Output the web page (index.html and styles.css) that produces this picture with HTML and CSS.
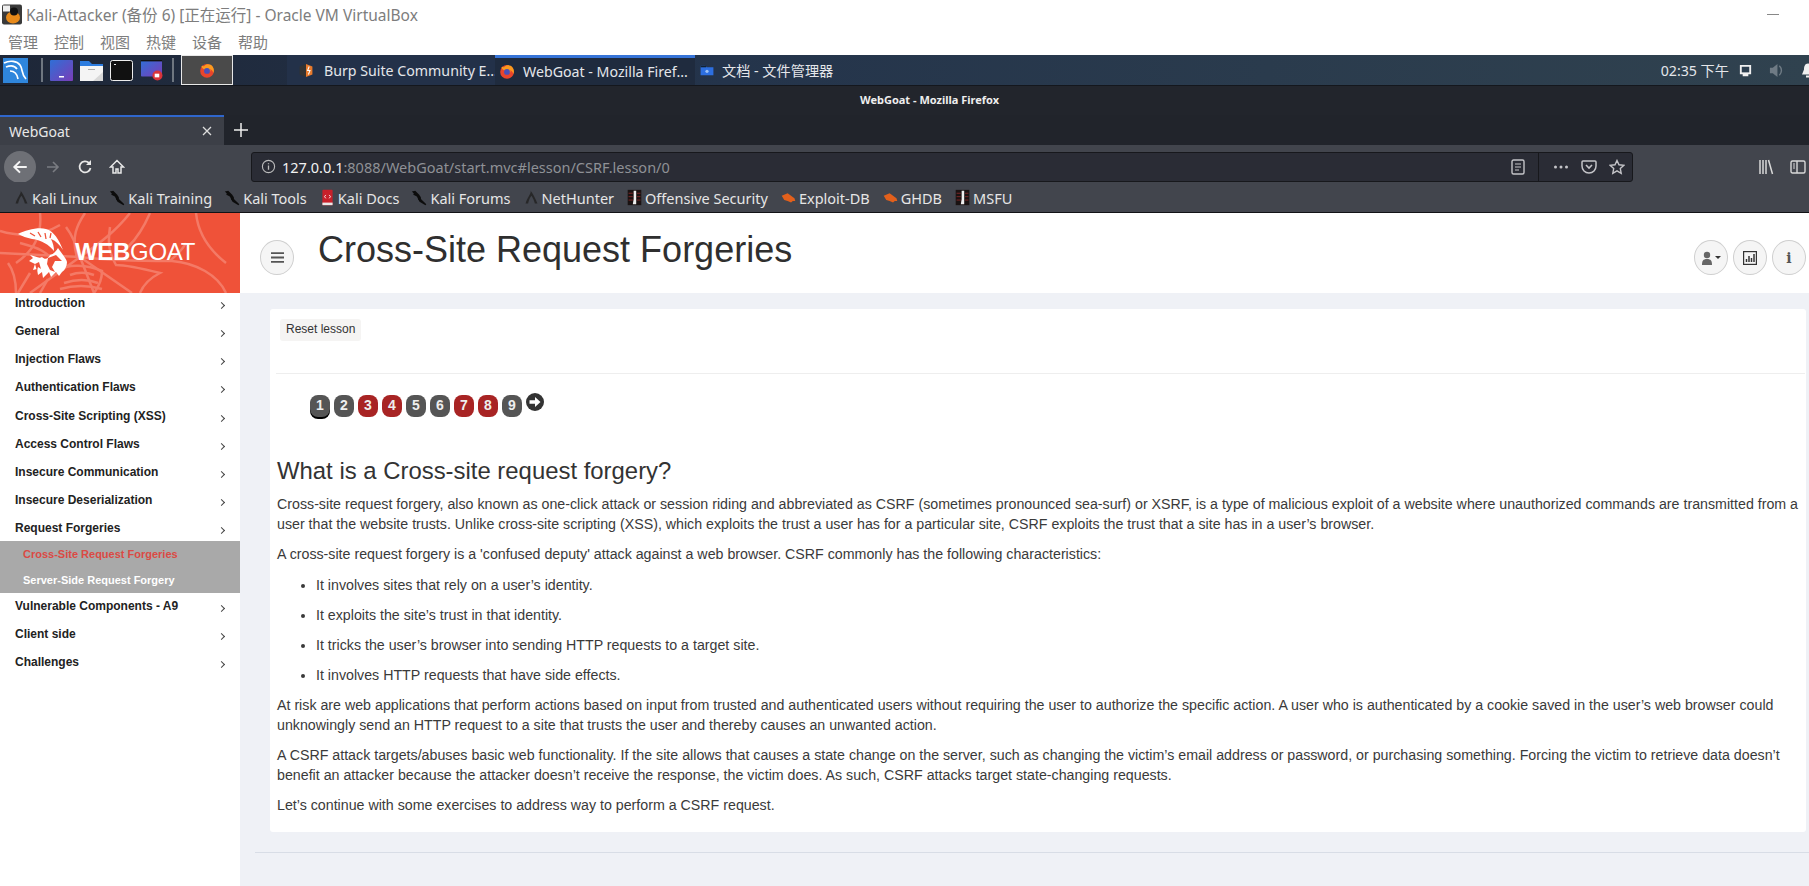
FILE: index.html
```html
<!DOCTYPE html>
<html lang="en">

<head>
    <meta charset="UTF-8">
    <title>WebGoat - Mozilla Firefox</title>
    <link rel="stylesheet" href="styles.css">
</head>

<body>
    <svg class="defs" width="0" height="0">
        <defs>
            <linearGradient id="screen" x1="0" y1="0" x2="1" y2="1">
                <stop offset="0" stop-color="#2f6fd6"/>
                <stop offset="1" stop-color="#7a3db8"/>
            </linearGradient>
        </defs>
        <symbol id="firefox" viewBox="0 0 20 20">
            <circle cx="10" cy="10.5" r="8.5" fill="#e8452c"/>
            <path d="M3 5c1-1 2-1 2-1 0 1 1 1 2 0 3-3 8-2 10 1 2 3 2 6 1 8-1-3-2-4-4-5 1 2 0 4-2 4-3 0-3-2-3-3-2 0-5-1-6-4z" fill="#fb9a1f"/>
            <circle cx="10" cy="10.5" r="3.7" fill="#4b4fb8"/>
        </symbol>
        <symbol id="dragon" viewBox="0 0 20 20">
            <path d="M1 3l4-1 5 5 2 5 6 6-1 1-7-4-3-6z" fill="#0c0c0c"/>
            <path d="M3 6l4 2M11 9l-2 4" stroke="#0c0c0c" stroke-width="1.500"/>
        </symbol>
        <symbol id="netdragon" viewBox="0 0 20 20">
            <path d="M9 2c1 3-4 8-6 15h3c1-4 2-7 4-9 2 3 3 6 4 9h3C15 12 12 6 9 2z" fill="#222" opacity=".85"/>
        </symbol>
        <symbol id="bug" viewBox="0 0 20 20">
            <path d="M2 8l7-3 8 6 1 3-3 0-2 2-4-2-4-1z" fill="#e2601c"/>
        </symbol>
        <symbol id="offsec" viewBox="0 0 20 20">
            <rect x="2" y="1" width="16" height="18" fill="#1a1212"/>
            <path d="M9 2h3v16H8l1-6z" fill="#eee"/>
            <path d="M3 5h5M3 9h5M3 13h5M13 5h4M13 9h4M13 13h4" stroke="#8a2a2a"/>
        </symbol>
    </svg>

    <header class="vbox-bar">
        <div class="vbox-title">
            <svg class="vbox-icon" viewBox="0 0 20 20">
                <rect width="20" height="20" rx="2" fill="#3a3a3a"/>
                <rect x="1" y="1" width="7" height="6" fill="#eee"/>
                <ellipse cx="11" cy="13" rx="7" ry="6" fill="#e88a1a"/>
                <circle cx="12" cy="7" r="4" fill="#111"/>
            </svg>
            <span>Kali-Attacker (备份 6) [正在运行] - Oracle VM VirtualBox</span>
            <span class="win-min"></span>
        </div>
        <nav class="vbox-menu">
            <span>管理</span><span>控制</span><span>视图</span><span>热键</span><span>设备</span><span>帮助</span>
        </nav>
    </header>

    <div class="panel">
        <svg class="kali-logo" viewBox="0 0 25 25">
            <rect width="25" height="25" fill="#2f86dc"/>
            <path d="M1 5c6-3 13-2 16 2 3 4 1 9 6 14M3 9c5-2 9-1 11 2M7 13c4 0 7 2 8 8" stroke="#fff" stroke-width="1.700" fill="none"/>
        </svg>
        <span class="panel-sep"></span>
        <div class="launchers">
            <svg viewBox="0 0 23 21"><rect width="23" height="21" rx="1" fill="url(#screen)"/><rect x="9" y="16" width="5" height="1.500" fill="#fff"/></svg>
            <svg viewBox="0 0 23 21"><path d="M0 1h9l3 3h11v6H0z" fill="#2d7de0"/><path d="M0 6h23v15H0z" fill="#f4f4f4"/><path d="M23 12v9H13z" fill="#d8d8d8"/><rect x="8" y="9" width="7" height="1" fill="#aaa"/></svg>
            <svg viewBox="0 0 23 21"><rect x=".5" y=".5" width="22" height="20" rx="2" fill="#111" stroke="#eee"/><rect x="4" y="4" width="2" height="1" fill="#eee"/></svg>
            <svg viewBox="0 0 23 23"><rect width="23" height="18" rx="1" fill="url(#screen)"/><rect width="23" height="1.500" fill="#111"/><circle cx="18" cy="17" r="5.500" fill="#d8343a"/><rect x="15" y="15" width="5" height="4" fill="#fff"/></svg>
        </div>
        <span class="panel-sep panel-sep-end"></span>
        <div class="launch-task"><svg><use href="#firefox"/></svg></div>
        <div class="tasks">
            <div class="task task-burp">
                <svg class="task-icon" viewBox="0 0 20 20"><path d="M2 5l8-3v16l-8-3z" fill="#333"/><path d="M10 2l8 3v10l-8 3z" fill="#e87a2c"/><path d="M14 5l-2 5h3l-2 5" stroke="#fff" stroke-width="1.300" fill="none"/></svg>
                <span>Burp Suite Community E...</span>
            </div>
            <div class="task task-active">
                <svg class="task-icon"><use href="#firefox"/></svg>
                <span>WebGoat - Mozilla Firef...</span>
            </div>
            <div class="task task-files">
                <svg class="task-icon" viewBox="0 0 20 20"><path d="M2 4h6l2 2h8v10H2z" fill="#2d6fe0"/><rect x="2" y="4" width="7" height="2" fill="#123"/><circle cx="10" cy="11" r="2" fill="#9cc2f5"/></svg>
                <span>文档 - 文件管理器</span>
            </div>
        </div>
        <div class="tray">
            <span class="clock">02:35 下午</span>
            <svg class="tray-net" viewBox="0 0 16 16"><path d="M2 2h12v10h-3v2H5v-2H2z" fill="#f0f0f0"/><rect x="4" y="4" width="8" height="6" fill="#2c3e4e"/></svg>
            <svg class="tray-vol" viewBox="0 0 16 16"><path d="M1 5h3l5-4v14l-5-4H1z" fill="#6f7b85"/><path d="M11 3c3 3 3 7 0 10" stroke="#6f7b85" fill="none" stroke-width="1.500"/></svg>
            <svg class="tray-bell" viewBox="0 0 16 16"><path d="M8 1c3 0 4 3 4 6l2 5H2l2-5c0-3 1-6 4-6z" fill="#f0f0f0"/><rect x="6" y="13" width="4" height="2" fill="#f0f0f0"/></svg>
        </div>
    </div>

    <div class="ff-title">WebGoat - Mozilla Firefox</div>

    <div class="ff-tabs">
        <div class="ff-tab">
            <span>WebGoat</span>
            <svg class="tab-close" viewBox="0 0 12 12"><path d="M2 2l8 8M10 2l-8 8" stroke="#ddd" stroke-width="1.300"/></svg>
        </div>
        <svg class="tab-new" viewBox="0 0 14 14"><path d="M7 0v14M0 7h14" stroke="#eee" stroke-width="1.500"/></svg>
    </div>

    <div class="ff-nav">
        <div class="nav-back">
            <svg viewBox="0 0 16 16"><path d="M14 8H3M8 3L3 8l5 5" stroke="#f4f4f4" stroke-width="1.800" fill="none"/></svg>
        </div>
        <svg class="nav-icon nav-forward" viewBox="0 0 16 16"><path d="M2 8h11M8 3l5 5-5 5" stroke="#7a7c82" stroke-width="1.600" fill="none"/></svg>
        <svg class="nav-icon" viewBox="0 0 16 16"><path d="M13.500 9A5.500 5.500 0 1 1 12 4" stroke="#e8e8e8" stroke-width="1.800" fill="none"/><path d="M14 1v5H9z" fill="#e8e8e8"/></svg>
        <svg class="nav-icon" viewBox="0 0 16 16"><path d="M8 1.500L1.500 8H4v6h3v-4h2v4h3V8h2.500z" stroke="#e8e8e8" stroke-width="1.500" fill="none"/></svg>
        <div class="url-bar">
            <svg class="url-info" viewBox="0 0 16 16"><circle cx="8" cy="8" r="6.500" stroke="#bbb" fill="none" stroke-width="1.200"/><path d="M8 7v4.500M8 4.500v1.200" stroke="#bbb" stroke-width="1.400"/></svg>
            <span class="url-text"><b>127.0.0.1</b>:8088/WebGoat/start.mvc#lesson/CSRF.lesson/0</span>
            <svg class="url-act" viewBox="0 0 16 16"><rect x="2" y="1" width="12" height="14" rx="1.500" stroke="#c4c4c8" stroke-width="1.400" fill="none"/><path d="M5 5h6M5 8h6M5 11h4" stroke="#c4c4c8"/></svg>
            <span class="url-sep"></span>
            <svg class="url-act url-dots" viewBox="0 0 16 16"><circle cx="2.500" cy="8" r="1.500" fill="#c4c4c8"/><circle cx="8" cy="8" r="1.500" fill="#c4c4c8"/><circle cx="13.500" cy="8" r="1.500" fill="#c4c4c8"/></svg>
            <svg class="url-act" viewBox="0 0 16 16"><path d="M2 2h12a1 1 0 0 1 1 1v4c0 4-3 7-7 7S1 11 1 7V3a1 1 0 0 1 1-1z" stroke="#c4c4c8" stroke-width="1.500" fill="none"/><path d="M5 6l3 3 3-3" stroke="#c4c4c8" stroke-width="1.600" fill="none"/></svg>
            <svg class="url-act" viewBox="0 0 16 16"><path d="M8 1.500l2 4.300 4.700.6-3.400 3.200.9 4.700L8 11.900l-4.200 2.400.9-4.700L1.300 6.400 6 5.800z" stroke="#c4c4c8" stroke-width="1.400" fill="none"/></svg>
        </div>
        <div class="nav-right">
            <svg class="nav-icon" viewBox="0 0 16 16"><path d="M2 1v14M5 1v14M8 1v14M10.500 1l4 14" stroke="#d8d8d8" stroke-width="1.500"/></svg>
            <svg class="nav-icon" viewBox="0 0 16 16"><rect x="1" y="2" width="14" height="12" rx="1.500" stroke="#d8d8d8" stroke-width="1.400" fill="none"/><path d="M7 2v12" stroke="#d8d8d8" stroke-width="1.400"/><path d="M3 5h2M3 7h2M3 9h2" stroke="#d8d8d8"/></svg>
        </div>
    </div>

    <div class="ff-bookmarks">
        <span class="bm"><svg><use href="#netdragon"/></svg>Kali Linux</span>
        <span class="bm"><svg><use href="#dragon"/></svg>Kali Training</span>
        <span class="bm"><svg><use href="#dragon"/></svg>Kali Tools</span>
        <span class="bm"><svg viewBox="0 0 20 20"><rect x="4" y="1" width="12" height="18" rx="1" fill="#c8202a"/><rect x="4" y="16" width="12" height="3" fill="#e8e8e8"/><path d="M8 7L6.500 9 8 11M12 7l1.500 2L12 11" stroke="#fff" fill="none"/></svg>Kali Docs</span>
        <span class="bm"><svg><use href="#dragon"/></svg>Kali Forums</span>
        <span class="bm"><svg><use href="#netdragon"/></svg>NetHunter</span>
        <span class="bm"><svg><use href="#offsec"/></svg>Offensive Security</span>
        <span class="bm"><svg><use href="#bug"/></svg>Exploit-DB</span>
        <span class="bm"><svg><use href="#bug"/></svg>GHDB</span>
        <span class="bm"><svg><use href="#offsec"/></svg>MSFU</span>
    </div>

    <div class="app">
        <aside class="sidebar">
            <div class="brand">
                <svg class="brand-web" viewBox="0 0 240 80" preserveAspectRatio="none">
                    <g stroke="#f47a66" stroke-width="2.500" fill="none">
                        <path d="M85 0c-8 12-14 24-8 44M40 0c2 20-4 36-24 50M0 18c20 6 40 6 60-6M130 0c-14 18-30 30-50 44l52 36M226 80c-8-18-30-30-54-32-24 0-60 0-92-4M80 44L30 80M80 44l14 36M80 44L0 40"/>
                        <path d="M110 14c-2 14-2 24 6 38 12 0 28 4 44 8-8 4-16 10-20 20M58 58c10-8 30-6 44 0 0 6-2 14-8 22M20 30c16 4 30 8 38 26"/>
                        <path d="M170 48c6-6 12-10 16-18M66 14c6 8 10 16 12 28M150 0c-6 14-14 26-22 34M196 0c2 20 12 36 30 50"/>
                        <path d="M70 62c8-3 16-3 24 0M64 70c12-4 24-4 34 0M60 76c14-4 28-4 42 0M30 60l-12 20M8 50c6 8 8 18 8 30M48 66l-8 14"/>
                    </g>
                </svg>
                <svg class="goat" viewBox="0 0 50 50">
                    <path d="M0 6C8 2 20-1 28 1c8 2 13 11 17 21-3-5-7-9-12-11 2 4 3 8 3 12-5-6-12-11-22-12C9 10 4 8 0 6z" fill="#fff"/>
                    <path d="M12 5l5 3M20 4l3 5M27 5l1 6M33 5l-1 5" stroke="#ef5239" stroke-width="1.300"/>
                    <path d="M40 20c4 6 8 10 9 14 0 4-2 8-5 10l-3 4-3-4-5 5-2-5-6 6-1-6-4 3-1-6-4 1 2-6-6-3 4-3-3-3c5 1 9 4 12 2 3 3 6 2 8-2 4-1 6-4 8-7z" fill="#fff"/>
                    <path d="M30 30l8-3 6 6h-7l-3 6 3 5-5-2-3-6z" fill="#ef5239"/>
                    <path d="M21 34l2 7-3-2-1 4-2-7z" fill="#ef5239"/>
                </svg>
                <span class="brand-name"><b>WEB</b>GOAT</span>
            </div>
            <ul class="menu">
                <li class="menu-item"><span>Introduction</span><i class="chev"></i></li>
                <li class="menu-item"><span>General</span><i class="chev"></i></li>
                <li class="menu-item"><span>Injection Flaws</span><i class="chev"></i></li>
                <li class="menu-item"><span>Authentication Flaws</span><i class="chev"></i></li>
                <li class="menu-item"><span>Cross-Site Scripting (XSS)</span><i class="chev"></i></li>
                <li class="menu-item"><span>Access Control Flaws</span><i class="chev"></i></li>
                <li class="menu-item"><span>Insecure Communication</span><i class="chev"></i></li>
                <li class="menu-item"><span>Insecure Deserialization</span><i class="chev"></i></li>
                <li class="menu-item menu-open"><span>Request Forgeries</span><i class="chev"></i></li>
                <li class="submenu">
                    <div class="sub-item sub-current">Cross-Site Request Forgeries</div>
                    <div class="sub-item">Server-Side Request Forgery</div>
                </li>
                <li class="menu-item"><span>Vulnerable Components - A9</span><i class="chev"></i></li>
                <li class="menu-item"><span>Client side</span><i class="chev"></i></li>
                <li class="menu-item"><span>Challenges</span><i class="chev"></i></li>
            </ul>
        </aside>

        <main class="main">
            <div class="topbar">
                <button class="round-btn menu-toggle">
                    <svg viewBox="0 0 12 10"><path d="M0 1h12M0 5h12M0 9h12" stroke="#555" stroke-width="1.700"/></svg>
                </button>
                <h1>Cross-Site Request Forgeries</h1>
                <div class="top-actions">
                    <button class="round-btn">
                        <svg class="user-icon" viewBox="0 0 20 14"><circle cx="6" cy="4" r="3.200" fill="#666"/><path d="M1 14c0-4 1-6 5-6s5 2 5 6z" fill="#666"/><path d="M14 5h6l-3 3z" fill="#333"/></svg>
                    </button>
                    <button class="round-btn">
                        <svg viewBox="0 0 14 14"><rect x=".6" y=".6" width="12.800" height="12.800" fill="none" stroke="#333" stroke-width="1.200"/><path d="M3.500 11V8M6 11V5M8.500 11V7M11 11V3" stroke="#333" stroke-width="1.500"/></svg>
                    </button>
                    <button class="round-btn info-btn">i</button>
                </div>
            </div>

            <section class="card">
                <div class="card-head">
                    <button class="reset-btn">Reset lesson</button>
                </div>
                <div class="steps">
                    <span class="step step-now">1</span>
                    <span class="step">2</span>
                    <span class="step step-red">3</span>
                    <span class="step step-red">4</span>
                    <span class="step">5</span>
                    <span class="step">6</span>
                    <span class="step step-red">7</span>
                    <span class="step step-red">8</span>
                    <span class="step">9</span>
                    <svg class="step-next" viewBox="0 0 18 18"><circle cx="9" cy="9" r="9" fill="#333"/><path d="M3.500 7.300h5.500V4l5.500 5-5.500 5v-3.300H3.500z" fill="#fff"/></svg>
                </div>
                <div class="lesson">
                    <h2>What is a Cross-site request forgery?</h2>
                    <p>Cross-site request forgery, also known as one-click attack or session riding and abbreviated as CSRF (sometimes pronounced sea-surf) or XSRF, is a type of malicious exploit of a website where unauthorized commands are transmitted from a user that the website trusts. Unlike cross-site scripting (XSS), which exploits the trust a user has for a particular site, CSRF exploits the trust that a site has in a user’s browser.</p>
                    <p>A cross-site request forgery is a 'confused deputy' attack against a web browser. CSRF commonly has the following characteristics:</p>
                    <ul>
                        <li>It involves sites that rely on a user’s identity.</li>
                        <li>It exploits the site’s trust in that identity.</li>
                        <li>It tricks the user’s browser into sending HTTP requests to a target site.</li>
                        <li>It involves HTTP requests that have side effects.</li>
                    </ul>
                    <p>At risk are web applications that perform actions based on input from trusted and authenticated users without requiring the user to authorize the specific action. A user who is authenticated by a cookie saved in the user’s web browser could unknowingly send an HTTP request to a site that trusts the user and thereby causes an unwanted action.</p>
                    <p>A CSRF attack targets/abuses basic web functionality. If the site allows that causes a state change on the server, such as changing the victim’s email address or password, or purchasing something. Forcing the victim to retrieve data doesn’t benefit an attacker because the attacker doesn’t receive the response, the victim does. As such, CSRF attacks target state-changing requests.</p>
                    <p>Let’s continue with some exercises to address way to perform a CSRF request.</p>
                </div>
            </section>
            <hr class="foot-line">
        </main>
    </div>
</body>

</html>
```

FILE: styles.css
```css
* {
    box-sizing: border-box;
}

html,
body {
    margin: 0;
    padding: 0;
    height: 886px;
    overflow: hidden;
}

body {
    display: flex;
    flex-direction: column;
    background-color: #ffffff;
    font-family: "Noto Sans", "Noto Sans CJK SC", sans-serif;
}

svg {
    display: block;
    flex-shrink: 0;
}

.defs {
    position: absolute;
}

/* virtualbox window */
.vbox-bar {
    height: 55px;
    padding: 0 0 0 2px;
    background-color: #ffffff;
    color: #7d7d7d;
}

.vbox-title {
    display: flex;
    align-items: center;
    gap: 4px;
    height: 29px;
    font-size: 15.5px;
}

.vbox-icon {
    width: 20px;
    height: 21px;
}

.win-min {
    width: 12px;
    height: 1px;
    margin-left: auto;
    margin-right: 30px;
    background-color: #888888;
}

.vbox-menu {
    display: flex;
    gap: 16px;
    padding-left: 6px;
    font-size: 15px;
    line-height: 26px;
}

/* xfce panel */
.panel {
    display: flex;
    align-items: center;
    height: 31px;
    background: linear-gradient(90deg, #1e2738, #24344b 40%, #30424f);
    border-bottom: 1px solid #14171d;
    color: #e4e6ea;
    font-size: 14.2px;
}

.kali-logo {
    width: 25px;
    height: 25px;
    margin-left: 3px;
}

.panel-sep {
    width: 2px;
    height: 24px;
    margin: 0 7px 0 13px;
    background-color: #6e7680;
}

.panel-sep-end {
    margin: 0 7px 0 9px;
}

.launchers {
    display: flex;
    gap: 7px;
}

.launchers svg {
    width: 23px;
    height: 21px;
}

.launch-task {
    display: flex;
    align-items: center;
    justify-content: center;
    width: 52px;
    height: 30px;
    border: 1px solid #e8e8e8;
    background-color: #4a4a4a;
}

.launch-task svg {
    width: 16px;
    height: 17px;
}

.tasks {
    display: flex;
    align-self: stretch;
    margin-left: 54px;
}

.task {
    display: flex;
    align-items: center;
    gap: 10px;
    padding-left: 11px;
    white-space: nowrap;
}

.task-burp {
    width: 208px;
    background-color: #233149;
}

.task-active {
    width: 200px;
    padding-left: 4px;
    gap: 8px;
    background-color: #1f2b3e;
    border-top: 3px solid #3674d8;
}

.task-files {
    padding-left: 4px;
    gap: 7px;
}

.task-icon {
    width: 16px;
    height: 17px;
}

.tray {
    display: flex;
    align-items: center;
    margin-left: auto;
}

.clock {
    margin-right: 9px;
}

.tray-net,
.tray-vol {
    width: 15px;
    height: 15px;
    margin-right: 16px;
}

.tray-bell {
    width: 16px;
    height: 17px;
    margin-right: -7px;
}

/* firefox */
.ff-title {
    height: 29px;
    padding-left: 860px;
    background-color: #22252c;
    color: #eeeeee;
    font-size: 11px;
    font-weight: bold;
    line-height: 27px;
}

.ff-tabs {
    display: flex;
    align-items: center;
    height: 30px;
    background-color: #21242b;
}

.ff-tab {
    display: flex;
    align-items: center;
    justify-content: space-between;
    width: 224px;
    height: 30px;
    padding: 0 11px 0 9px;
    background-color: #3c3f47;
    border-top: 2px solid #2f66cc;
    color: #e8e8e8;
    font-size: 14px;
}

.tab-close {
    width: 12px;
    height: 12px;
}

.tab-new {
    width: 14px;
    height: 14px;
    margin-left: 10px;
}

.ff-nav {
    display: flex;
    align-items: center;
    height: 37px;
    padding: 6px 0 0 4px;
    background-color: #42454d;
}

.nav-back {
    display: flex;
    align-items: center;
    justify-content: center;
    width: 32px;
    height: 32px;
    border-radius: 50%;
    background-color: #6e7076;
}

.nav-back svg {
    width: 18px;
    height: 18px;
}

.nav-icon {
    width: 16px;
    height: 16px;
    margin-left: 16px;
}

.nav-forward {
    margin-left: 9px;
}

.url-bar {
    display: flex;
    align-items: center;
    width: 1382px;
    height: 30px;
    margin-left: 126px;
    padding: 0 7px 0 9px;
    background-color: #2a2c35;
    border: 1px solid #17181c;
    border-radius: 3px;
    color: #8f9196;
    font-size: 14.5px;
}

.url-info {
    width: 15px;
    height: 15px;
    margin-right: 6px;
}

.url-text {
    margin-right: auto;
    white-space: nowrap;
}

.url-text b {
    color: #f2f2f2;
    font-weight: normal;
}

.url-act {
    width: 16px;
    height: 16px;
}

.url-sep {
    width: 1px;
    height: 28px;
    margin: 0 14px 0 12px;
    background-color: #17181c;
}

.url-dots {
    margin-right: 12px;
}

.url-act + .url-act {
    margin-right: 12px;
}

.url-act:last-child {
    margin-right: 0;
}

.nav-right {
    display: flex;
    margin-left: 109px;
}

.ff-bookmarks {
    display: flex;
    align-items: center;
    gap: 12px;
    height: 31px;
    padding: 1px 0 0 13px;
    background-color: #42454d;
    border-bottom: 1px solid #111216;
    color: #e6e6e6;
    font-size: 14.5px;
    white-space: nowrap;
}

.bm {
    display: flex;
    align-items: center;
    gap: 2px;
}

.bm svg {
    width: 17px;
    height: 17px;
}

/* webgoat */
.app {
    display: flex;
    flex: 1;
    min-height: 0;
    font-family: "Liberation Sans", sans-serif;
    color: #333333;
}

.sidebar {
    width: 240px;
    flex-shrink: 0;
    background-color: #ffffff;
}

.brand {
    position: relative;
    display: flex;
    align-items: center;
    height: 80px;
    padding-left: 18px;
    background-color: #ef5239;
    overflow: hidden;
}

.brand-web {
    position: absolute;
    top: 0;
    left: 0;
    width: 240px;
    height: 80px;
}

.goat {
    position: relative;
    width: 50px;
    height: 50px;
}

.brand-name {
    position: relative;
    top: -1px;
    margin-left: 7px;
    color: #ffffff;
    font-size: 24px;
    letter-spacing: -.3px;
}

.menu {
    margin: 0;
    padding: 0;
    list-style: none;
}

.menu-item {
    display: flex;
    justify-content: space-between;
    height: 23px;
    margin-bottom: 5.15px;
    padding: 0 16px 0 15px;
    color: #222222;
    font-size: 12px;
    font-weight: bold;
    line-height: 20px;
}

.menu-open {
    margin-bottom: 0;
}

.chev {
    width: 5px;
    height: 5px;
    margin-top: 10px;
    border-top: 1px solid #444444;
    border-right: 1px solid #444444;
    transform: rotate(45deg);
}

.submenu {
    height: 52px;
    margin-bottom: 3px;
    padding-left: 23px;
    background-color: #a9a9a9;
    font-size: 11px;
    font-weight: bold;
    color: #ffffff;
}

.sub-item {
    height: 26px;
    line-height: 26px;
}

.sub-current {
    color: #db4a44;
}

.main {
    flex: 1;
    min-width: 0;
    background-color: #eff1f6;
}

.topbar {
    display: flex;
    align-items: flex-start;
    height: 80px;
    padding: 27px 3px 0 20px;
    background-color: #ffffff;
}

.round-btn {
    display: flex;
    align-items: center;
    justify-content: center;
    width: 34px;
    height: 35px;
    padding: 0;
    background-color: #f5f5f5;
    border: 1px solid #cfcfcf;
    border-radius: 50%;
}

.round-btn svg {
    width: 14px;
    height: 14px;
}

.round-btn .user-icon {
    width: 20px;
}

.menu-toggle svg {
    width: 13px;
    height: 11px;
}

.topbar h1 {
    margin: -10px 0 0 24px;
    color: #2f2f2f;
    font-size: 36px;
    font-weight: normal;
    line-height: 40px;
}

.top-actions {
    display: flex;
    gap: 5px;
    margin-left: auto;
}

.info-btn {
    color: #555555;
    font-family: "DejaVu Serif", serif;
    font-size: 14px;
    font-weight: bold;
}

.card {
    height: 523px;
    margin: 16px 3px 0 30px;
    padding: 10px 1px 0 6px;
    background-color: #ffffff;
    border-radius: 3px;
}

.card-head {
    height: 55px;
    padding-left: 4px;
    border-bottom: 1px solid #eeeeee;
}

.reset-btn {
    display: block;
    height: 22px;
    padding: 0 6px 2px;
    background-color: #f5f4f3;
    border: 0;
    border-radius: 3px;
    color: #333333;
    font-family: "Liberation Sans", sans-serif;
    font-size: 12px;
}

.steps {
    display: flex;
    align-items: flex-start;
    gap: 4px;
    padding: 21px 0 0 34px;
}

.step {
    width: 20px;
    height: 22px;
    background-color: #555555;
    border-radius: 8px;
    color: #eeeeee;
    font-size: 14px;
    font-weight: bold;
    line-height: 21px;
    text-align: center;
}

.step-now {
    box-shadow: 0 2px 0 #000000;
}

.step-red {
    background-color: #a82424;
}

.step-next {
    width: 18px;
    height: 18px;
    margin-top: -2px;
}

.lesson {
    padding: 0 0 0 1px;
    font-size: 14.22px;
    line-height: 20px;
    color: #3a3a3a;
}

.lesson h2 {
    margin: 41px 0 10px;
    color: #333333;
    font-size: 23.9px;
    font-weight: normal;
    line-height: 26px;
}

.lesson p {
    margin: 0 0 10px;
}

.lesson ul {
    margin: 11px 0 10px;
    padding-left: 39px;
}

.lesson li {
    margin-bottom: 10px;
}

.foot-line {
    height: 1px;
    margin: 20px 0 0 15px;
    background-color: #d8dde6;
    border: 0;
}
```
